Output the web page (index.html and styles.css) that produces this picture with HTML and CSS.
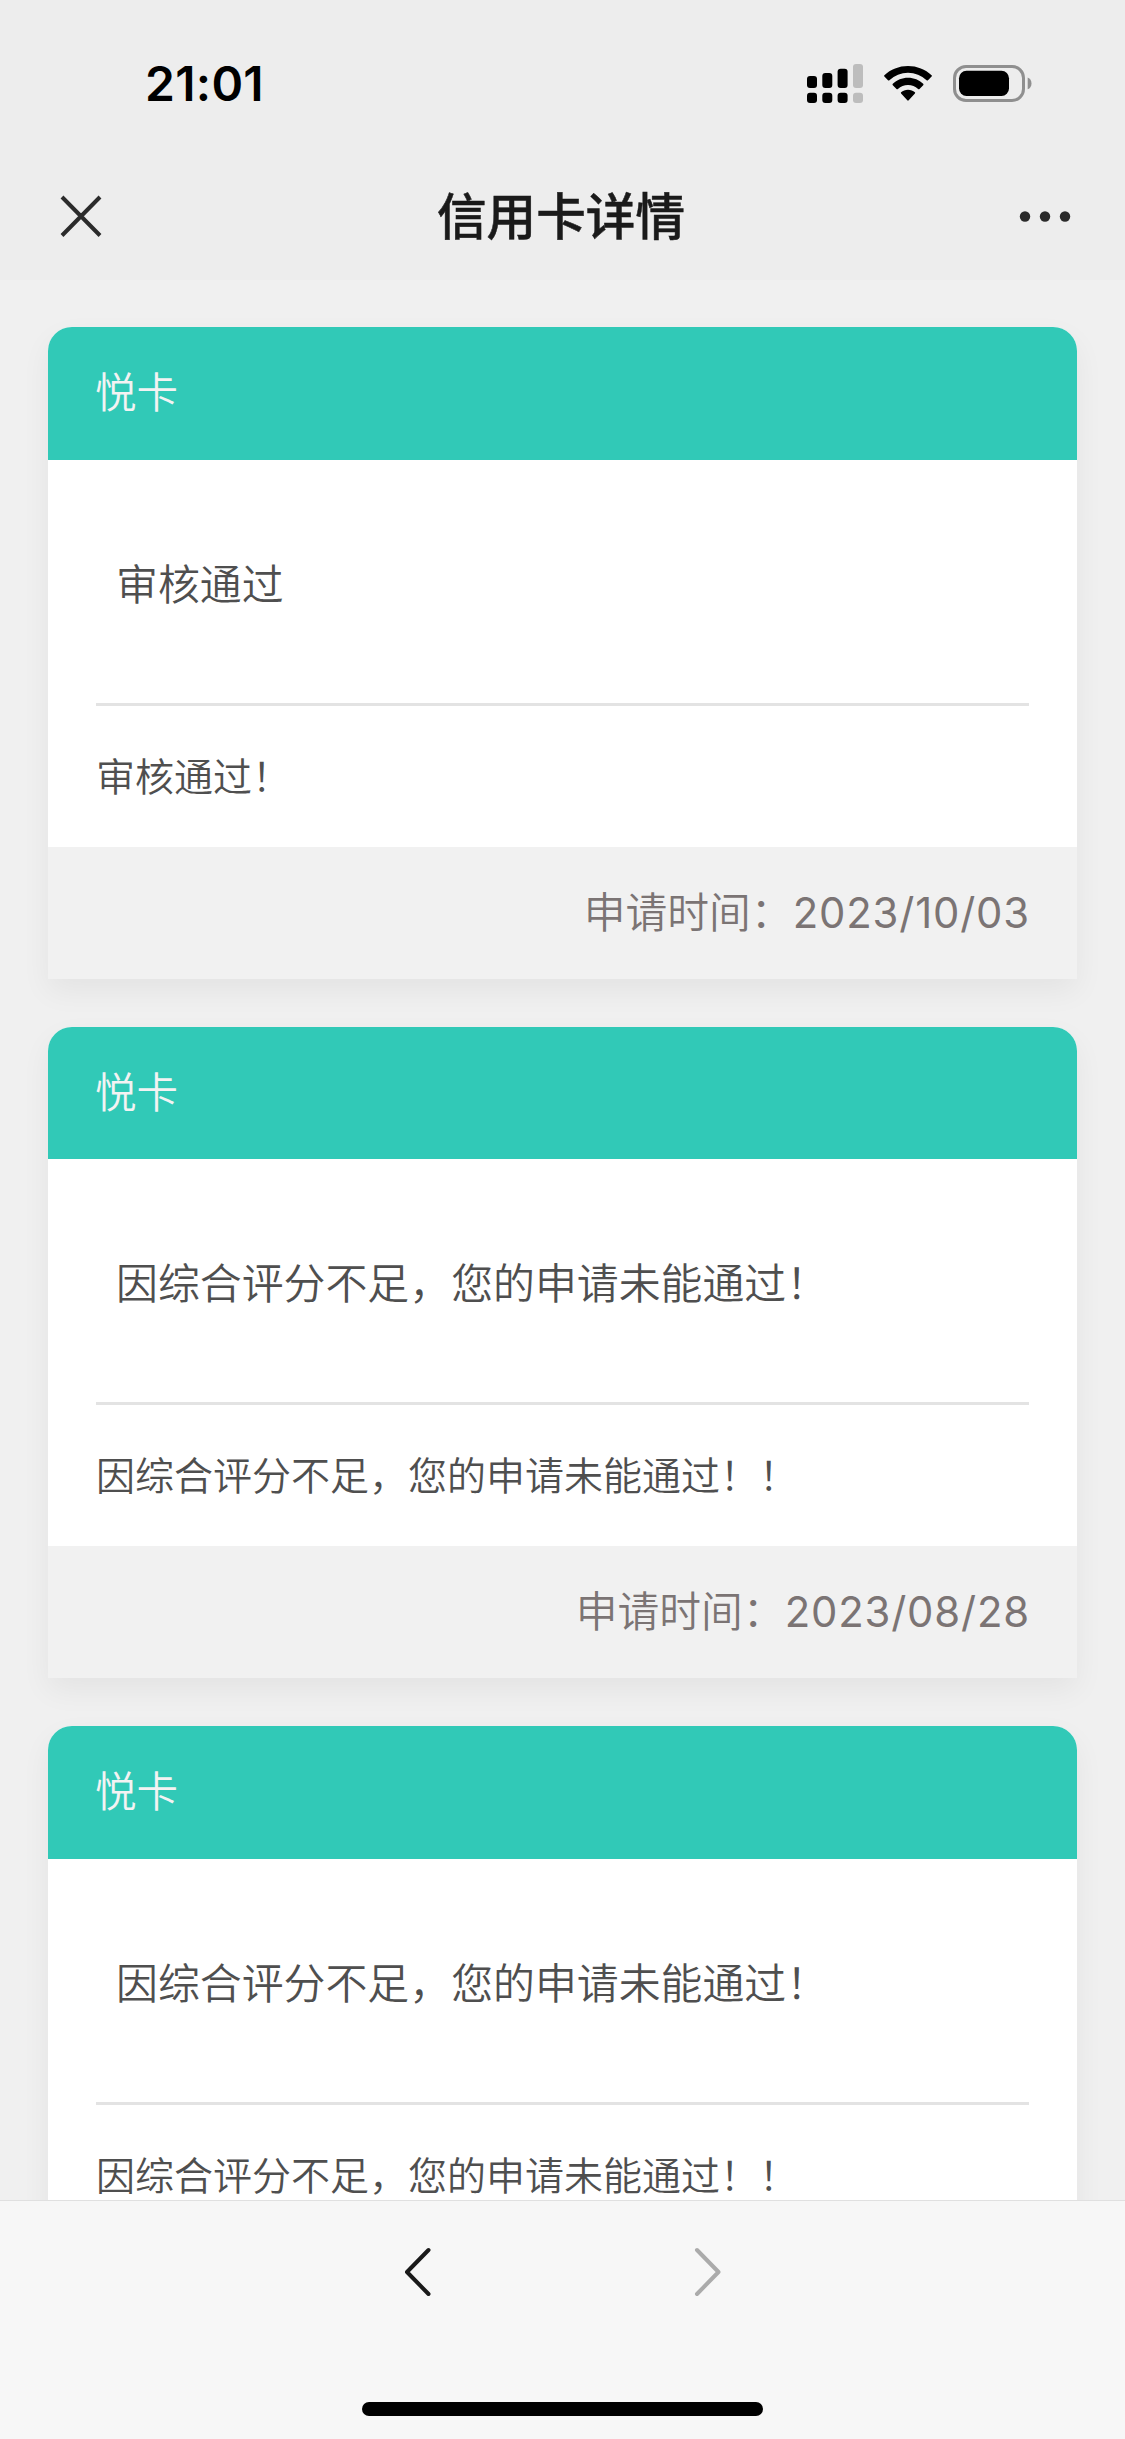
FILE: index.html
```html
<!DOCTYPE html>
<html lang="zh-CN">
<head>
<meta charset="utf-8">
<title>信用卡详情</title>
<link rel="stylesheet" href="styles.css">
</head>
<body>
<div class="screen">
  <header class="top">
    <div class="status">
      <span class="time">21:01</span>
      <div class="status-icons">
        <svg width="56" height="40" viewBox="0 0 56 40">
          <rect x="0" y="12" width="10" height="12" rx="3"/>
          <rect x="15.3" y="9" width="10" height="15" rx="3"/>
          <rect x="30.6" y="4.7" width="10" height="19.3" rx="3"/>
          <rect class="dim" x="46" y="0" width="10" height="24" rx="3"/>
          <rect x="0" y="28.7" width="10" height="10.3" rx="3"/>
          <rect x="15.3" y="28.7" width="10" height="10.3" rx="3"/>
          <rect x="30.6" y="28.7" width="10" height="10.3" rx="3"/>
          <rect class="dim" x="46" y="28.7" width="10" height="10.3" rx="3"/>
        </svg>
        <svg width="48" height="40" viewBox="0 0 48 40">
          <path d="M24 2C33 2 41.400 5.400 47.600 11.200Q48.200 11.900 47.600 12.500L44 16.200Q43.300 16.800 42.600 16.200A27 27 0 0 0 5.400 16.200Q4.700 16.800 4 16.200L.4 12.500Q-.2 11.900 .4 11.200C6.600 5.400 15 2 24 2Z"/>
          <path d="M24 13.800C29.900 13.800 35.200 16.100 39.200 19.800Q39.900 20.500 39.200 21.200L35.500 24.900Q34.800 25.500 34.100 24.900A15 15 0 0 0 13.900 24.900Q13.200 25.500 12.500 24.900L8.800 21.200Q8.100 20.500 8.800 19.800C12.800 16.100 18.100 13.800 24 13.800Z"/>
          <path d="M24 25.800C26.700 25.800 29.100 26.700 30.900 28.300Q31.500 28.900 30.900 29.500L24.700 36.300Q24 37 23.300 36.300L17.100 29.500Q16.500 28.900 17.100 28.300C18.900 26.700 21.300 25.800 24 25.800Z"/>
        </svg>
        <svg width="79" height="40" viewBox="0 0 79 40">
          <rect class="battery-shell" x="1.500" y="2.500" width="69" height="34" rx="11.500"/>
          <rect x="6" y="6.700" width="50" height="25.300" rx="7.500"/>
          <path class="battery-cap" d="M74.700 13.500C77.200 14.500 78.500 16.800 78.500 19.400S77.200 24.300 74.700 25.300Z"/>
        </svg>
      </div>
    </div>
    <nav class="navbar">
      <svg class="close" width="42" height="42" viewBox="0 0 42 42"><path d="M2 2L40 40.500M40 2L2 40.500"/></svg>
      <h1 class="title">信用卡详情</h1>
      <svg class="more" width="52" height="12" viewBox="0 0 52 12"><circle cx="6" cy="6.500" r="5.200"/><circle cx="26" cy="6.500" r="5.200"/><circle cx="46" cy="6.500" r="5.200"/></svg>
    </nav>
  </header>

  <main class="content">
    <article class="card">
      <h2 class="card-head">悦卡</h2>
      <div class="card-body">
        <p class="result">审核通过</p>
        <p class="detail">审核通过！</p>
      </div>
      <footer class="card-foot">申请时间：<span class="date">2023/10/03</span></footer>
    </article>
    <article class="card">
      <h2 class="card-head">悦卡</h2>
      <div class="card-body">
        <p class="result">因综合评分不足，您的申请未能通过！</p>
        <p class="detail">因综合评分不足，您的申请未能通过！！</p>
      </div>
      <footer class="card-foot">申请时间：<span class="date">2023/08/28</span></footer>
    </article>
    <article class="card">
      <h2 class="card-head">悦卡</h2>
      <div class="card-body">
        <p class="result">因综合评分不足，您的申请未能通过！</p>
        <p class="detail">因综合评分不足，您的申请未能通过！！</p>
      </div>
    </article>
  </main>

  <div class="toolbar">
    <div class="arrows">
      <svg class="back" width="28" height="50" viewBox="0 0 28 50"><path d="M24.500 3L3 25L24.500 47"/></svg>
      <svg class="forward" width="28" height="50" viewBox="0 0 28 50"><path d="M3 3L24.500 25L3 47"/></svg>
    </div>
    <div class="home-indicator"></div>
  </div>
</div>
</body>
</html>
```
FILE: styles.css
```css
* { box-sizing: border-box; margin: 0; padding: 0; }

body {
  background: #f0f0f0;
  font-family: "Noto Sans CJK SC", sans-serif;
}

svg { display: block; }

.screen {
  width: 1125px;
  height: 2439px;
  display: flex;
  flex-direction: column;
  overflow: hidden;
}

.top { height: 280px; background: #ededed; flex: none; }

.status {
  height: 152px;
  padding: 16px 93px 0 145px;
  display: flex;
  align-items: center;
  justify-content: space-between;
}

.time {
  font: 600 48px/56px Inter, sans-serif;
  letter-spacing: .3px;
  color: #000;
}

.status-icons { display: flex; gap: 21px; }
.status-icons .dim { fill: #bdbdbd; }
.battery-shell { fill: none; stroke: #8f8f8f; stroke-width: 3; }
.battery-cap { fill: #8f8f8f; }

.navbar {
  height: 128px;
  padding: 0 54px 0 60px;
  display: grid;
  grid-template-columns: 52px 1fr 52px;
  align-items: center;
}
.close { fill: none; stroke: #2b2b2b; stroke-width: 4; }
.more { fill: #2b2b2b; }
.title {
  padding: 0 9px 6px 0;
  font-size: 49.600px;
  line-height: 72px;
  font-weight: 500;
  -webkit-text-stroke: .5px #1a1a1a;
  color: #1a1a1a;
  text-align: center;
}

.content {
  flex: 1;
  min-height: 0;
  overflow: hidden;
  padding: 47px 48px 0;
  display: flex;
  flex-direction: column;
  gap: 48px;
}

.card {
  flex: none;
  background: #fff;
  border-radius: 24px 24px 0 0;
  box-shadow: 0 12px 30px rgba(0, 0, 0, .055);
}

.card-head {
  height: 132.600px;
  padding: 0 47px;
  border-radius: 24px 24px 0 0;
  background: #31c9b7;
  color: #f3f3f3;
  font-size: 41.500px;
  line-height: 127px;
  font-weight: 350;
}

.card-body { padding: 0 48px; }

.result {
  height: 246px;
  padding-left: 20px;
  border-bottom: 3px solid #e3e3e3;
  font-size: 41.900px;
  line-height: 243px;
  font-weight: 350;
  color: #4f4f4f;
}

.detail {
  height: 141px;
  font-size: 39px;
  line-height: 137px;
  font-weight: 350;
  color: #4f4f4f;
}

.card-foot {
  height: 132px;
  padding: 0 47px;
  background: #f1f1f1;
  color: #7b7474;
  font-size: 41.800px;
  line-height: 126px;
  font-weight: 350;
  text-align: right;
}
.date { font-family: Inter, sans-serif; font-weight: 400; letter-spacing: .85px; }

.toolbar {
  flex: none;
  height: 239px;
  padding: 46px 0 23px;
  border-top: 1px solid #e0e0e0;
  background: #f7f7f7;
  display: flex;
  flex-direction: column;
  justify-content: space-between;
  align-items: center;
}
.arrows { display: flex; gap: 262px; fill: none; }
.arrows svg { stroke-width: 4; stroke-linecap: round; stroke-linejoin: round; }
.back { stroke: #1a1a1a; }
.forward { stroke: #ababab; }
.home-indicator { width: 401px; height: 14px; border-radius: 7px; background: #000; }
```
